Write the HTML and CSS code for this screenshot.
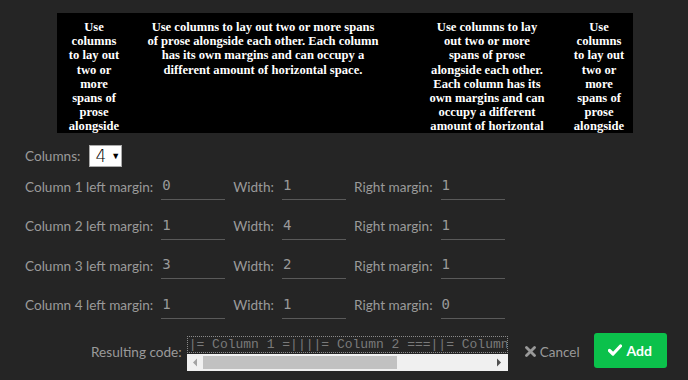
FILE: index.html
```html
<!DOCTYPE html>
<html>
<head>
<meta charset="utf-8">
<link rel="stylesheet" href="styles.css">
</head>
<body>
<div class="preview">
  <div class="col c1">Use columns to lay out two or more spans of prose alongside each other. Each column has its own margins and can occupy a different amount of horizontal space.</div>
  <div class="col c2">Use columns to lay out two or more spans of prose alongside each other. Each column has its own margins and can occupy a different amount of horizontal space.</div>
  <div class="col c3">Use columns to lay out two or more spans of prose alongside each other. Each column has its own margins and can occupy a different amount of horizontal space.</div>
  <div class="col c4">Use columns to lay out two or more spans of prose alongside each other. Each column has its own margins and can occupy a different amount of horizontal space.</div>
</div>
<div class="form">
  <div class="row count-row">
    <span class="label">Columns:</span>
    <span class="select">4<span class="arrow">▼</span></span>
  </div>
  <div class="row">
    <span class="label">Column 1 left margin:</span><span class="input">0</span>
    <span class="label">Width:</span><span class="input">1</span>
    <span class="label">Right margin:</span><span class="input">1</span>
  </div>
  <div class="row">
    <span class="label">Column 2 left margin:</span><span class="input">1</span>
    <span class="label">Width:</span><span class="input">4</span>
    <span class="label">Right margin:</span><span class="input">1</span>
  </div>
  <div class="row">
    <span class="label">Column 3 left margin:</span><span class="input">3</span>
    <span class="label">Width:</span><span class="input">2</span>
    <span class="label">Right margin:</span><span class="input">1</span>
  </div>
  <div class="row">
    <span class="label">Column 4 left margin:</span><span class="input">1</span>
    <span class="label">Width:</span><span class="input">1</span>
    <span class="label">Right margin:</span><span class="input">0</span>
  </div>
</div>
<div class="footer">
  <span class="label code-label">Resulting code:</span>
  <div class="code">
    <div class="code-text">|= Column 1 =||||= Column 2 ===||= Column 3 ==||= Column 4 =|</div>
    <div class="scrollbar">
      <svg class="sb-arrow" width="8" height="17" viewBox="0 0 8 17"><path d="M6 4.5 L2 8.5 L6 12.5 Z" fill="#a3a3a3"/></svg>
      <div class="sb-track"><div class="sb-thumb"></div></div>
      <svg class="sb-arrow" width="8" height="17" viewBox="0 0 8 17"><path d="M2 4.5 L6 8.5 L2 12.5 Z" fill="#505050"/></svg>
    </div>
  </div>
  <span class="cancel">
    <svg width="11" height="11" viewBox="0 0 11 11"><path d="M1.5 1.5 L9.5 9.5 M9.5 1.5 L1.5 9.5" stroke="#999" stroke-width="2.8" stroke-linecap="round"/></svg>
    Cancel
  </span>
  <span class="add">
    <svg width="14" height="12" viewBox="0 0 14 12"><path d="M1.5 6.5 L5 10 L12.5 2" fill="none" stroke="#fff" stroke-width="3.2" stroke-linecap="round" stroke-linejoin="round"/></svg>
    Add
  </span>
</div>
</body>
</html>
```

FILE: styles.css
```css
html, body {
  margin: 0;
  padding: 0;
  background: #252525;
}
body {
  width: 688px;
  height: 380px;
  overflow: hidden;
  font-family: "Lato", "Open Sans", sans-serif;
}
.preview {
  margin: 13px 0 0 57px;
  width: 576px;
  height: 120px;
  background: #000;
  overflow: hidden;
  display: grid;
  grid-template-columns: 9px 56px 25px 232px 50px 116px 27px 54px;
  align-items: start;
  padding-top: 7px;
  box-sizing: border-box;
}
.col {
  color: #fff;
  font-family: "Liberation Serif", serif;
  font-weight: bold;
  font-size: 12.6px;
  line-height: 14.2px;
  text-align: center;
}
.c1 { grid-column: 2; }
.c2 { grid-column: 4; }
.c3 { grid-column: 6; }
.c4 { grid-column: 8; }

.form {
  padding-left: 25px;
}
.row {
  display: flex;
  align-items: center;
  height: 27px;
  margin-top: 12.5px;
}
.count-row {
  height: 22px;
  margin-top: 12px;
  margin-bottom: -6.5px;
}
.label {
  color: #9a9a9a;
  font-size: 13.6px;
}
.select {
  margin-left: 8px;
  width: 33px;
  height: 22px;
  box-sizing: border-box;
  background: #fff;
  border: 1px solid #aaa;
  display: flex;
  align-items: center;
  padding-left: 6px;
  font-size: 17px;
  color: #000;
  font-family: "DejaVu Sans", sans-serif;
  font-weight: 300;
}
.arrow {
  font-size: 9px;
  margin-left: 5px;
}
.input {
  width: 64px;
  height: 27px;
  box-sizing: border-box;
  border-bottom: 1px solid #5a5a5a;
  margin-left: 8px;
  margin-right: 8px;
  color: #9a9a9a;
  font-family: "DejaVu Sans Mono", monospace;
  font-size: 14px;
  padding: 3px 0 0 1px;
  line-height: 18px;
  align-self: flex-end;
}
.footer {
  display: flex;
  align-items: center;
  padding-left: 91px;
  margin-top: 14px;
  height: 38px;
}
.code-label {
  font-size: 13.6px;
  margin-right: 5px;
}
.code {
  width: 321px;
  margin-top: 3px;
}
.code-text {
  border: 1px dotted #8a8a8a;
  height: 17px;
  box-sizing: border-box;
  overflow: hidden;
  white-space: nowrap;
  font-family: "Liberation Mono", monospace;
  font-size: 13px;
  line-height: 15px;
  color: #7a7a7a;
  padding-left: 1px;
}
.scrollbar {
  margin-top: 1px;
  height: 17px;
  background: #f0f0f0;
  display: flex;
  align-items: center;
  padding: 0 5px 0 4px;
}
.sb-track {
  flex: 1;
  height: 13px;
  margin: 0 4px;
}
.sb-thumb {
  width: 194px;
  height: 13px;
  background: #c1c1c1;
}
.cancel {
  margin-left: 17px;
  color: #999;
  font-size: 13.5px;
  display: flex;
  align-items: center;
  gap: 4px;
}
.add {
  margin-left: 14px;
  width: 73px;
  height: 35px;
  margin-top: -3px;
  background: #0bc14b;
  border-radius: 3px;
  color: #fff;
  font-weight: bold;
  font-size: 14px;
  display: flex;
  align-items: center;
  justify-content: center;
  gap: 4px;
}
```
